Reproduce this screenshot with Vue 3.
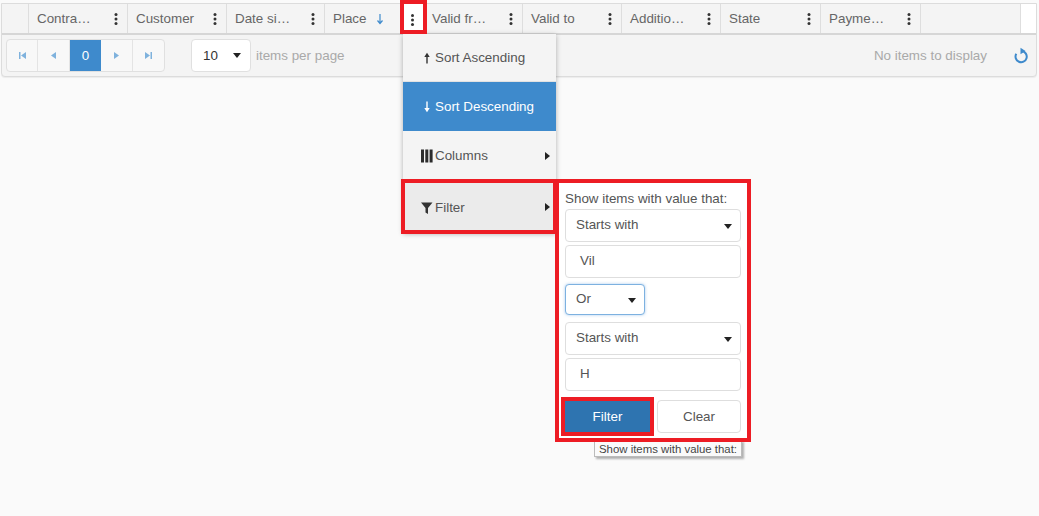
<script setup>
const columns = [
  { label: 'Contra…', w: 99 },
  { label: 'Customer', w: 99 },
  { label: 'Date si…', w: 98 },
  { label: 'Place', w: 99, sorted: true, active: true },
  { label: 'Valid fr…', w: 99 },
  { label: 'Valid to', w: 99 },
  { label: 'Additio…', w: 99 },
  { label: 'State', w: 100 },
  { label: 'Payme…', w: 100 }
]
</script>

<template>
  <div class="page">
    <section class="grid">
      <div class="head">
        <div class="cell first"></div>
        <div
          v-for="c in columns"
          :key="c.label"
          class="cell"
          :class="{ open: c.active }"
          :style="{ width: c.w + 'px' }"
        >
          <span class="label">{{ c.label }}</span>
          <svg v-if="c.sorted" class="sort" width="8" height="12" viewBox="0 0 8 12"><path d="M4 1v9M1.500 7.500 4 10.500l2.500-3" fill="none" stroke="#3e8acc" stroke-width="1.200"/></svg>
          <span class="spacer"></span>
          <svg class="dots" width="4" height="14" viewBox="0 0 4 14"><circle cx="2" cy="2.500" r="1.500"/><circle cx="2" cy="7" r="1.500"/><circle cx="2" cy="11.500" r="1.500"/></svg>
        </div>
        <div class="cell last"></div>
        <div class="gutter"></div>
      </div>
      <div class="pager">
        <div class="pages">
          <button class="pg"><svg width="9" height="9" viewBox="0 0 9 9"><path d="M1 1h1.500v7H1zM8 1v7L3 4.500z"/></svg></button>
          <button class="pg"><svg width="9" height="9" viewBox="0 0 9 9"><path d="M7 1v7L2 4.500z"/></svg></button>
          <button class="pg cur">0</button>
          <button class="pg"><svg width="9" height="9" viewBox="0 0 9 9"><path d="M2 1v7l5-3.500z"/></svg></button>
          <button class="pg"><svg width="9" height="9" viewBox="0 0 9 9"><path d="M1 1v7l5-3.500zM6.500 1H8v7H6.500z"/></svg></button>
        </div>
        <div class="size">
          <span>10</span>
          <i class="caret"></i>
        </div>
        <span class="muted per">items per page</span>
        <span class="spacer"></span>
        <span class="muted none">No items to display</span>
        <svg class="refresh" width="16" height="17" viewBox="0 0 16 17"><path d="M9 4.100A5.600 5.600 0 1 1 3.300 6.800" fill="none" stroke="#3e8acc" stroke-width="2"/><path d="M7.500 .8v6.400L12.500 4z" fill="#3e8acc"/></svg>
      </div>
    </section>

    <div class="menu">
      <div class="item i1">
        <svg class="ic" width="14" height="12" viewBox="0 0 14 12"><path d="M6 11.500V3" stroke="#333" stroke-width="1.400"/><path d="M3.300 5 6 .8 8.700 5z" fill="#333"/></svg>
        <span>Sort Ascending</span>
      </div>
      <div class="item selected">
        <svg class="ic" width="14" height="12" viewBox="0 0 14 12"><path d="M6 .5V9" stroke="#fff" stroke-width="1.400"/><path d="M3.300 7 6 11.200 8.700 7z" fill="#fff"/></svg>
        <span>Sort Descending</span>
      </div>
      <div class="item i3">
        <svg class="ic" width="14" height="14" viewBox="0 0 14 14"><path d="M0 .5h3v13H0zM4.300 .5h3v13h-3zM8.600 .5h3v13h-3z" fill="#2b2b2b"/></svg>
        <span>Columns</span>
        <i class="arrow"></i>
      </div>
      <div class="item hover">
        <svg class="ic" width="14" height="14" viewBox="0 0 14 14"><path d="M0 1.500h11.500L7 7v6L4.500 11.500V7z" fill="#333"/></svg>
        <span>Filter</span>
        <i class="arrow"></i>
      </div>
    </div>

    <form class="filter" @submit.prevent>
      <div class="hint">Show items with value that:</div>
      <div class="control pick"><span>Starts with</span><i class="caret"></i></div>
      <div class="control text">Vil</div>
      <div class="control pick logic"><span>Or</span><i class="caret"></i></div>
      <div class="control pick"><span>Starts with</span><i class="caret"></i></div>
      <div class="control text">H</div>
      <div class="actions">
        <button class="btn primary">Filter</button>
        <button class="btn secondary">Clear</button>
      </div>
    </form>

    <div class="tip">Show items with value that:</div>

    <div class="mark m-head"></div>
    <div class="mark m-item"></div>
    <div class="mark m-form"></div>
    <div class="mark m-btn"></div>
  </div>
</template>

<style>
html, body { margin: 0; background: #fafafa; }
</style>

<style scoped>
.page {
  position: relative;
  width: 1039px;
  height: 516px;
  overflow: hidden;
  background: #fafafa;
  font: 13.4px/20px "Liberation Sans", Arial, sans-serif;
  color: #666;
  padding: 3px 0 0 1px;
  box-sizing: border-box;
}
.grid {
  width: 1036px;
  box-sizing: border-box;
  border: 1px solid #dcdcdc;
  border-radius: 0 0 4px 4px;
  background: #f4f4f4;
  box-shadow: 0 1px 1px rgba(0, 0, 0, .06);
}
.head {
  display: flex;
  height: 29px;
  border-bottom: 2px solid #d6d6d6;
  box-sizing: content-box;
}
.cell {
  display: flex;
  align-items: center;
  box-sizing: border-box;
  padding: 1px 9px 0 8px;
  border-right: 1px solid #dedede;
  height: 29px;
  flex: none;
}
.cell.first { width: 27px; padding: 0; }
.cell.last { width: 100px; padding: 0; }
.cell.open .dots { visibility: hidden; }
.gutter { flex: 1; background: #fff; }
.label { white-space: nowrap; }
.sort { margin-left: 9px; }
.spacer { flex: 1; }
.dots { fill: #333; }

.pager {
  display: flex;
  align-items: center;
  height: 41px;
  padding-left: 4px;
}
.pages {
  display: flex;
  height: 33px;
  box-sizing: border-box;
  border: 1px solid #e0e0e0;
  border-radius: 4px;
  background: #f8f8f8;
  overflow: hidden;
}
.pg {
  width: 31.400px;
  padding: 0;
  border: 0;
  border-right: 1px solid #e4e4e4;
  background: transparent;
  font: inherit;
  color: #fff;
  display: flex;
  align-items: center;
  justify-content: center;
}
.pg:last-child { border-right: 0; }
.pg svg { fill: #7fb2dd; }
.pg.cur { background: #3e8acc; border-right: 0; }
.size {
  margin-left: 26px;
  width: 60px;
  height: 33px;
  box-sizing: border-box;
  border: 1px solid #e0e0e0;
  border-radius: 4px;
  background: #fff;
  color: #333;
  display: flex;
  align-items: center;
  justify-content: space-between;
  padding: 0 9px 0 11px;
}
.caret {
  width: 0;
  height: 0;
  border-left: 4px solid transparent;
  border-right: 4px solid transparent;
  border-top: 5px solid #222;
}
.muted { color: #a9a9a9; }
.per { margin-left: 5px; }
.none { margin-right: 26px; }
.refresh { margin-right: 7px; }

.menu {
  position: absolute;
  left: 403px;
  top: 34px;
  width: 153px;
  background: #f4f4f4;
  box-shadow: 0 1px 5px rgba(0, 0, 0, .3);
}
.item {
  position: relative;
  display: flex;
  align-items: center;
  height: 49px;
  padding: 1px 0 0 18px;
  border-bottom: 1px solid #e2e2e2;
  box-sizing: border-box;
  color: #555;
}
.i1 { height: 48px; }
.i3 { height: 50px; }
.item .ic { flex: none; }
.selected { background: #3e8acc; color: #fff; border-bottom-color: #3e8acc; }
.hover { background: #ebebeb; height: 52px; border-bottom: 0; }
.arrow {
  position: absolute;
  right: 6px;
  top: 50%;
  margin-top: -4px;
  border-top: 4px solid transparent;
  border-bottom: 4px solid transparent;
  border-left: 5px solid #222;
}

.filter {
  position: absolute;
  left: 556px;
  top: 182px;
  width: 192px;
  height: 256px;
  box-sizing: border-box;
  padding: 9px 7px 0 9px;
  background: #fff;
  color: #555;
}
.hint { line-height: 16px; height: 16px; margin-bottom: 2px; }
.control {
  height: 33px;
  box-sizing: border-box;
  border: 1px solid #dedede;
  border-radius: 4px;
  background: #fff;
  margin-bottom: 3px;
  display: flex;
  align-items: center;
  line-height: 20px;
  padding-bottom: 2px;
}
.pick { justify-content: space-between; padding: 0 8px 2px 10px; }
.pick .caret { margin-top: 3px; }
.text { padding-left: 14px; }
.logic {
  width: 80px;
  height: 31px;
  margin: 6px 0 7px;
  padding-bottom: 1px;
  border-color: #7db1e0;
  box-shadow: 0 0 3px rgba(82, 150, 220, .5);
}
.actions { display: flex; justify-content: space-between; margin-top: 9px; }
.btn {
  height: 33px;
  padding: 0;
  border: 1px solid #dedede;
  border-radius: 4px;
  background: #fff;
  color: #555;
  font: inherit;
}
.secondary { width: 84px; }
.primary { width: 85px; background: #2e74b0; border-color: #2e74b0; color: #fff; border-radius: 0; }

.tip {
  position: absolute;
  left: 594px;
  top: 440px;
  height: 17px;
  padding: 1px 4px 0;
  box-sizing: border-box;
  border: 1px solid #bbb;
  background: #fafafa;
  font-size: 11.400px;
  line-height: 14px;
  color: #444;
  white-space: nowrap;
  box-shadow: 2px 2px 2px rgba(0, 0, 0, .3);
}

.mark {
  position: absolute;
  box-sizing: border-box;
  border: 4px solid #ed1c24;
}
.m-head { left: 400px; top: 0; width: 27px; height: 34px; background: #fff; }
.m-item { left: 401px; top: 179px; width: 156px; height: 55px; }
.m-form { left: 555px; top: 179px; width: 196px; height: 263px; }
.m-btn { left: 561px; top: 397px; width: 93px; height: 39px; }
.m-head::after {
  content: "";
  position: absolute;
  left: 7px;
  top: 10px;
  width: 3px;
  height: 3px;
  border-radius: 50%;
  background: #333;
  box-shadow: 0 4.500px 0 #333, 0 9px 0 #333;
}
</style>
